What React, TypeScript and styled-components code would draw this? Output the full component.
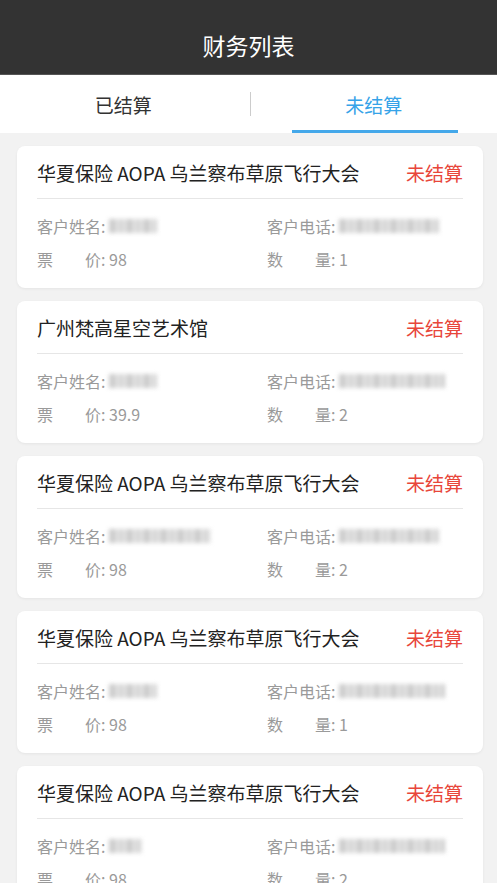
import { FunctionComponent } from 'react'
import { styled, createGlobalStyle } from 'styled-components'

const GlobalStyle = createGlobalStyle`
  html, body {
    margin: 0;
    padding: 0;
    background-color: #f2f2f2;
    font-family: "Noto Sans CJK SC", "Noto Sans", sans-serif;
    overflow: hidden;
  }
`

type Order = {
  title: string
  nameWidth: number
  phoneWidth: number
  price: string
  count: number
}

const orders: Order[] = [
  { title: '华夏保险 AOPA 乌兰察布草原飞行大会', nameWidth: 48, phoneWidth: 100, price: '98', count: 1 },
  { title: '广州梵高星空艺术馆', nameWidth: 48, phoneWidth: 106, price: '39.9', count: 2 },
  { title: '华夏保险 AOPA 乌兰察布草原飞行大会', nameWidth: 102, phoneWidth: 100, price: '98', count: 2 },
  { title: '华夏保险 AOPA 乌兰察布草原飞行大会', nameWidth: 48, phoneWidth: 106, price: '98', count: 1 },
  { title: '华夏保险 AOPA 乌兰察布草原飞行大会', nameWidth: 33, phoneWidth: 106, price: '98', count: 2 }
]

const App: FunctionComponent = () => {
  return (
    <Page>
      <GlobalStyle />
      <Header>财务列表</Header>
      <Tabs>
        <Tab>已结算</Tab>
        <TabDivider />
        <Tab active>未结算</Tab>
      </Tabs>
      <List>
        {orders.map((order, i) => (
          <Card key={i}>
            <TitleRow>
              <Title>{order.title}</Title>
              <Status>未结算</Status>
            </TitleRow>
            <Info>
              <Field>
                <Label>客户姓名</Label>:&nbsp;
                <Blurred style={{ width: order.nameWidth }} />
              </Field>
              <Field>
                <Label>客户电话</Label>:&nbsp;
                <Blurred style={{ width: order.phoneWidth }} />
              </Field>
              <Field>
                <Label>票价</Label>: {order.price}
              </Field>
              <Field>
                <Label>数量</Label>: {order.count}
              </Field>
            </Info>
          </Card>
        ))}
      </List>
    </Page>
  )
}
export default App

const Page = styled.div`
  width: 100%;
  min-height: 883px;
  background-color: #f2f2f2;
`

const Header = styled.div`
  height: 58px;
  padding-top: 16px;
  background-color: #333333;
  color: #ffffff;
  font-size: 23px;
  display: flex;
  align-items: center;
  justify-content: center;
  border-bottom: 1px solid #555;
`

const Tabs = styled.div`
  height: 58px;
  background-color: #ffffff;
  display: flex;
  align-items: center;
`

const Tab = styled.div<{ active?: boolean }>`
  flex: 1;
  height: 100%;
  display: flex;
  align-items: center;
  justify-content: center;
  font-size: 19px;
  color: ${(props) => (props.active ? '#36a3e8' : '#333333')};
  position: relative;

  &::after {
    content: '';
    display: ${(props) => (props.active ? 'block' : 'none')};
    position: absolute;
    bottom: 0;
    left: 17%;
    right: 16%;
    height: 3px;
    background-color: #44a8ea;
  }
`

const TabDivider = styled.div`
  width: 1px;
  height: 24px;
  margin-left: 3px;
  background-color: #cccccc;
`

const List = styled.div`
  display: flex;
  flex-direction: column;
  gap: 13px;
  padding: 13px 14px 0 17px;
`

const Card = styled.div`
  background-color: #ffffff;
  border-radius: 8px;
  padding: 0 20px;
  box-shadow: 0 1px 3px rgba(0, 0, 0, 0.06);
`

const TitleRow = styled.div`
  height: 52px;
  display: flex;
  align-items: center;
  justify-content: space-between;
  border-bottom: 1px solid #e6e6e6;
`

const Title = styled.div`
  font-size: 19px;
  color: #222222;
  white-space: nowrap;
`

const Status = styled.div`
  font-size: 19px;
  color: #e8463a;
`

const Info = styled.div`
  display: grid;
  grid-template-columns: 230px 1fr;
  grid-auto-rows: 33px;
  padding: 10px 0 13px;
`

const Field = styled.div`
  display: flex;
  align-items: center;
  font-size: 16px;
  color: #9a9a9a;
  white-space: pre;
`

const Label = styled.span`
  display: inline-block;
  width: 64px;
  text-align: justify;
  text-align-last: justify;
`

const Blurred = styled.span`
  display: inline-block;
  height: 14px;
  background: repeating-linear-gradient(90deg, #c8c8c8 0 7px, #e4e4e4 7px 10px, #d2d2d2 10px 15px, #ededed 15px 17px);
  filter: blur(2px);
  opacity: 0.9;
`
